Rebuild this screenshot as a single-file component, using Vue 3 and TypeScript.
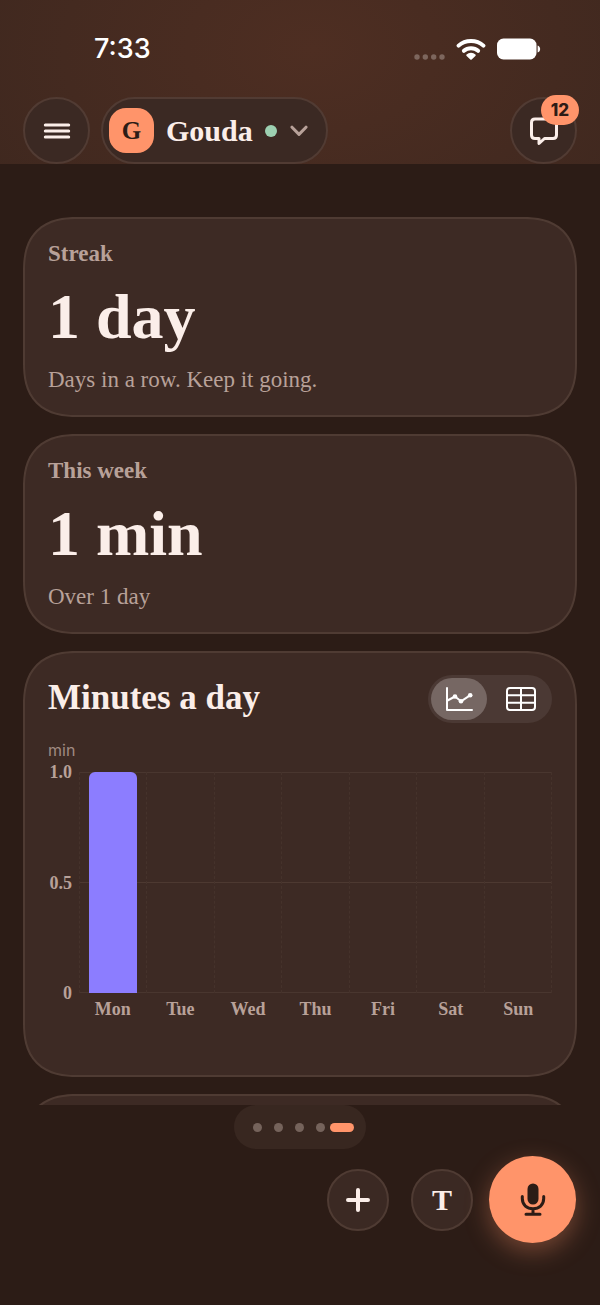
<script setup lang="ts">
import { ref } from 'vue'

interface Stat {
  label: string
  value: string
  note: string
}

interface Day {
  name: string
  minutes: number
}

const stats: Stat[] = [
  { label: 'Streak', value: '1 day', note: 'Days in a row. Keep it going.' },
  { label: 'This week', value: '1 min', note: 'Over 1 day' },
]

const days: Day[] = [
  { name: 'Mon', minutes: 1 },
  { name: 'Tue', minutes: 0 },
  { name: 'Wed', minutes: 0 },
  { name: 'Thu', minutes: 0 },
  { name: 'Fri', minutes: 0 },
  { name: 'Sat', minutes: 0 },
  { name: 'Sun', minutes: 0 },
]

const ticks = ['1.0', '0.5', '0']
const view = ref<'chart' | 'table'>('chart')
const page = ref(4)
</script>

<template>
  <div class="screen">
    <header class="top">
      <div class="status">
        <span class="time">7:33</span>
        <span class="signals">
          <svg class="cell" viewBox="0 0 32 8" aria-hidden="true">
            <circle cx="4" cy="4" r="2.7" /><circle cx="12.3" cy="4" r="2.7" />
            <circle cx="20.7" cy="4" r="2.7" /><circle cx="29" cy="4" r="2.7" />
          </svg>
          <svg class="wifi" viewBox="0 0 30 22" aria-hidden="true">
            <path d="M2.6 7.6C9.3 1.3 20.7 1.3 27.4 7.6" />
            <path d="M7.9 12.8C11.7 9.3 18.3 9.3 22.1 12.8" />
            <path class="solid" d="M15 20.8L11.3 17.3C13.2 15.3 16.8 15.3 18.7 17.3Z" />
          </svg>
          <svg class="battery" viewBox="0 0 44 22" aria-hidden="true">
            <rect x="0" y="0.5" width="39.5" height="21" rx="6.5" />
            <path d="M40.6 7.5C44 8.5 44 13.5 40.6 14.5Z" />
          </svg>
        </span>
      </div>
      <nav class="bar">
        <button class="round" type="button" aria-label="Menu">
          <svg class="icon-menu" viewBox="0 0 28 18" aria-hidden="true">
            <path d="M2.3 3H25.7M2.3 9H25.7M2.3 15H25.7" />
          </svg>
        </button>
        <button class="profile" type="button">
          <span class="avatar">G</span>
          <span class="name">Gouda</span>
          <span class="online"></span>
          <svg class="chevron" viewBox="0 0 18 12" aria-hidden="true"><path d="M2 2.2L9 9.4L16 2.2" /></svg>
        </button>
        <button class="round messages" type="button" aria-label="Messages, 12 unread">
          <svg class="icon-chat" viewBox="0 0 30 30" aria-hidden="true">
            <path d="M6 3H24Q27.5 3 27.5 6.500V19Q27.500 22.500 24 22.500H15.500L10 27.500V22.500H6Q2.500 22.500 2.500 19V6.500Q2.500 3 6 3Z" />
          </svg>
          <span class="badge">12</span>
        </button>
      </nav>
    </header>

    <main class="content">
      <section v-for="s in stats" :key="s.label" class="card stat">
        <h2 class="label">{{ s.label }}</h2>
        <p class="value">{{ s.value }}</p>
        <p class="note">{{ s.note }}</p>
      </section>

      <section class="card">
        <div class="card-head">
          <h2 class="title">Minutes a day</h2>
          <div class="toggle">
            <button type="button" :class="{ on: view === 'chart' }" aria-label="Chart" @click="view = 'chart'">
              <svg class="icon-view" viewBox="0 0 30 26" aria-hidden="true">
                <path d="M3 2V24H28" />
                <path d="M3.500 14.500L11 10.500L17 15.300L26 9.300" />
                <circle cx="11" cy="10.500" r="2.300" /><circle cx="17" cy="15.300" r="2.300" /><circle cx="26.200" cy="9.200" r="2.300" />
              </svg>
            </button>
            <button type="button" :class="{ on: view === 'table' }" aria-label="Table" @click="view = 'table'">
              <svg class="icon-view" viewBox="0 0 30 26" aria-hidden="true">
                <rect x="1" y="2" width="28" height="22" rx="3" />
                <path d="M1 9.3H29M1 16.7H29M15 2V24" />
              </svg>
            </button>
          </div>
        </div>
        <p class="unit">min</p>
        <div class="chart">
          <div class="axis">
            <span v-for="t in ticks" :key="t">{{ t }}</span>
          </div>
          <div class="plot">
            <div v-for="d in days" :key="d.name" class="column">
              <div v-if="d.minutes" class="fill" :style="{ height: d.minutes * 100 + '%' }"></div>
            </div>
          </div>
          <div class="names">
            <span v-for="d in days" :key="d.name">{{ d.name }}</span>
          </div>
        </div>
      </section>

      <section class="card next"></section>
    </main>

    <footer class="bottom">
      <div class="pager">
        <button
          v-for="n in 5"
          :key="n"
          type="button"
          :class="{ current: page === n - 1 }"
          :aria-label="'Page ' + n"
          @click="page = n - 1"
        ></button>
      </div>
      <div class="actions">
        <div class="minor">
          <button class="small" type="button" aria-label="Add">
            <svg class="icon-plus" viewBox="0 0 24 24" aria-hidden="true"><path d="M12 2V22M2 12H22" /></svg>
          </button>
          <button class="small" type="button" aria-label="Type text">T</button>
        </div>
        <button class="mic" type="button" aria-label="Record">
          <svg class="icon-mic" viewBox="0 0 26 34" aria-hidden="true">
            <rect x="7.5" y="0.5" width="11" height="21" rx="5.5" />
            <path d="M2.3 13.5V15.5C2.3 22 7 25.7 13 25.7S23.7 22 23.7 15.5V13.5M13 26V31M6 31.3H20" />
          </svg>
        </button>
      </div>
    </footer>
  </div>
</template>

<style>
body {
  margin: 0;
  background: #2c1c16;
}
</style>

<style scoped>
.screen {
  height: 100vh;
  display: flex;
  flex-direction: column;
  background: #2c1c16;
  color: #fbeee9;
  font-family: "Liberation Serif", serif;
  box-sizing: border-box;
}
.screen * {
  box-sizing: border-box;
}
h2,
p {
  margin: 0;
}
button {
  padding: 0;
  border: 0;
  background: none;
  color: inherit;
  font: inherit;
  cursor: pointer;
}
svg {
  display: block;
  fill: none;
  stroke: currentColor;
  stroke-linecap: round;
  stroke-linejoin: round;
}

.top {
  flex: none;
  padding: 0 23px;
  background: radial-gradient(ellipse 62% 150% at 52% 30%, #4e2e22, #3f281f);
}
.status {
  height: 97px;
  display: flex;
  justify-content: space-between;
  align-items: center;
  padding: 0 36px 0 71px;
  color: #fff;
}
.time {
  font: 500 27px/32px Inter, sans-serif;
}
.signals {
  display: flex;
  align-items: center;
}
.cell {
  width: 32px;
  height: 8px;
  margin-top: 16px;
  fill: #7d665d;
  stroke: none;
}
.wifi {
  width: 30px;
  height: 22px;
  margin: 0 11px;
  stroke-width: 4;
}
.wifi .solid {
  fill: currentColor;
  stroke-width: 2;
}
.battery {
  width: 44px;
  height: 22px;
  fill: currentColor;
  stroke: none;
}
.bar {
  display: flex;
  align-items: center;
  gap: 11px;
}
.round,
.profile {
  height: 67px;
  border: 2px solid #513b33;
  background: #3b2923;
}
.round {
  width: 67px;
  border-radius: 50%;
  display: grid;
  place-items: center;
}
.icon-menu {
  width: 28px;
  height: 18px;
  stroke-width: 3;
}
.profile {
  display: flex;
  align-items: center;
  border-radius: 34px;
  padding: 0 18px 0 6px;
}
.avatar {
  width: 45px;
  height: 45px;
  border-radius: 17px;
  background: #ff946a;
  color: #2c1c16;
  font-size: 25px;
  font-weight: 700;
  line-height: 45px;
}
.name {
  margin: 0 12px;
  font-size: 30px;
  line-height: 36px;
  font-weight: 700;
}
.online {
  width: 12px;
  height: 12px;
  border-radius: 50%;
  background: #9dd0b1;
}
.chevron {
  width: 18px;
  height: 12px;
  margin-left: 13px;
  color: #b8a199;
  stroke-width: 3;
}
.messages {
  position: relative;
  margin-left: auto;
}
.icon-chat {
  width: 30px;
  height: 30px;
  stroke-width: 3;
}
.badge {
  position: absolute;
  top: -4px;
  right: -4px;
  width: 38px;
  height: 30px;
  border-radius: 15px;
  background: #ff946a;
  color: #2c1c16;
  font: 800 17px/30px Inter, sans-serif;
}

.content {
  flex: 1;
  min-height: 0;
  overflow: hidden;
  display: flex;
  flex-direction: column;
  gap: 17px;
  padding: 53px 23px 0;
}
.card {
  flex: none;
  padding: 22px 23px;
  border: 2px solid #4f3b33;
  border-radius: 45px;
  background: #3d2a24;
}
@supports (corner-shape: superellipse(1.3)) {
  .card {
    border-radius: 54px;
    corner-shape: superellipse(1.3);
  }
}
.label {
  font-size: 23px;
  line-height: 26px;
  color: #b8a199;
}
.value {
  margin: 18px 0;
  font-size: 64px;
  line-height: 64px;
  font-weight: 700;
}
.note {
  font-size: 23px;
  line-height: 26px;
  color: #b8a199;
}
.next {
  height: 199px;
}
.card-head {
  display: flex;
  justify-content: space-between;
  align-items: center;
}
.title {
  font-size: 35px;
  line-height: 40px;
  padding-bottom: 3px;
}
.toggle {
  display: flex;
  justify-content: space-between;
  width: 124px;
  height: 48px;
  padding: 3px;
  border-radius: 24px;
  background: #4b3934;
  color: #fff;
}
.toggle button {
  width: 56px;
  height: 42px;
  border-radius: 21px;
  display: grid;
  place-items: center;
}
.toggle .on {
  background: #766763;
}
.icon-view {
  width: 30px;
  height: 26px;
  stroke-width: 2;
}
.icon-view circle {
  fill: currentColor;
  stroke: none;
}
.unit {
  margin-top: 16px;
  color: #a08a82;
  font: 400 16px/22px Inter, sans-serif;
}
.chart {
  display: grid;
  grid-template-columns: 24px 1fr;
  column-gap: 7px;
  padding-bottom: 33px;
  color: #b8a199;
  font-size: 18px;
  line-height: 22px;
  font-weight: 700;
}
.axis {
  height: 243px;
  display: flex;
  flex-direction: column;
  justify-content: space-between;
  text-align: right;
}
.plot {
  margin: 11px 0;
  display: grid;
  grid-template-columns: repeat(7, 1fr);
  border-right: 1px dashed #45322b;
  background:
    linear-gradient(#49362f, #49362f) 0 0 / 100% 1px no-repeat,
    linear-gradient(#4d3931, #4d3931) 0 50% / 100% 1px no-repeat,
    linear-gradient(#49362f, #49362f) 0 100% / 100% 1px no-repeat;
}
.column {
  border-left: 1px dashed #45322b;
  display: flex;
  justify-content: center;
  align-items: flex-end;
}
.fill {
  width: 48px;
  border-radius: 6px 6px 0 0;
  background: #8c7dff;
}
.names {
  grid-column: 2;
  margin-top: -6px;
  display: grid;
  grid-template-columns: repeat(7, 1fr);
  text-align: center;
}

.bottom {
  flex: none;
  height: 200px;
  padding: 0 24px;
}
.pager {
  width: 132px;
  height: 44px;
  margin: 0 auto;
  padding-right: 12px;
  display: flex;
  align-items: center;
  justify-content: flex-end;
  gap: 12px;
  border-radius: 22px;
  background: #382720;
}
.pager button {
  width: 9px;
  height: 9px;
  border-radius: 5px;
  background: #75635b;
}
.pager .current {
  width: 24px;
  margin-left: -7px;
  background: #ff946a;
}
.actions {
  margin-top: 7px;
  display: flex;
  align-items: center;
  justify-content: flex-end;
  gap: 16px;
}
.minor {
  display: flex;
  gap: 22px;
}
.small {
  width: 62px;
  height: 62px;
  border: 2px solid #4f3b33;
  border-radius: 50%;
  background: #3b2923;
  display: grid;
  place-items: center;
  font-size: 30px;
  line-height: 34px;
  font-weight: 700;
}
.icon-plus {
  width: 24px;
  height: 24px;
  stroke-width: 4;
}
.mic {
  width: 87px;
  height: 87px;
  border-radius: 50%;
  background: #ff946a;
  color: #2c1c16;
  display: grid;
  place-items: center;
  box-shadow: 0 8px 24px rgba(255, 148, 106, 0.35);
}
.icon-mic {
  width: 26px;
  height: 34px;
  stroke-width: 3;
}
.icon-mic rect {
  fill: currentColor;
  stroke: none;
}
</style>
